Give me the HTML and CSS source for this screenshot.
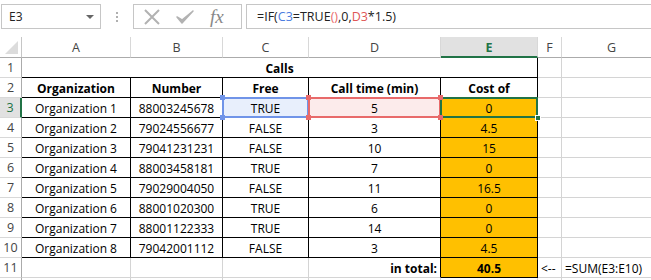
FILE: index.html
```html
<!DOCTYPE html>
<html>
<head>
<meta charset="UTF-8">
<title>Calls</title>
<link rel="stylesheet" href="styles.css">
</head>
<body>

    <div class="formula-bar">
        <div class="name-box">
            <span class="name">E3</span>
            <span class="drop"></span>
        </div>
        <div class="dots"><i></i><i></i><i></i></div>
        <div class="fn-box">
            <svg class="ico" width="20" height="20" viewBox="0 0 20 20">
                <path d="M3 3 L17 17 M17 3 L3 17" stroke="#b2b2b2" stroke-width="2" fill="none"/>
            </svg>
            <svg class="ico" width="22" height="20" viewBox="0 0 22 20">
                <path d="M3 10 L8 16 L19 4 L8 13 Z" fill="#b2b2b2" stroke="#b2b2b2" stroke-width="1.5" stroke-linejoin="round"/>
            </svg>
            <span class="fx">fx</span>
        </div>
        <div class="formula">
            <span>=IF(<span class="ref-c">C3</span>=TRUE<span class="paren">()</span>,0,<span class="ref-d">D3</span>*1.5)</span>
        </div>
    </div>

    <div class="sheet">
        <!-- column headers -->
        <div class="corner"><span class="tri"></span></div>
        <div class="col-h">A</div>
        <div class="col-h">B</div>
        <div class="col-h">C</div>
        <div class="col-h">D</div>
        <div class="col-h active">E</div>
        <div class="col-h">F</div>
        <div class="col-h">G</div>

        <!-- row 1 -->
        <div class="row-h">1</div>
        <div class="cell merged bold br bb">Calls</div>
        <div class="cell"></div>
        <div class="cell"></div>

        <!-- row 2 -->
        <div class="row-h">2</div>
        <div class="cell bold br bb">Organization</div>
        <div class="cell bold br bb">Number</div>
        <div class="cell bold br bb">Free</div>
        <div class="cell bold br bb">Call time (min)</div>
        <div class="cell bold br bb">Cost of</div>
        <div class="cell"></div>
        <div class="cell"></div>

        <!-- row 3 -->
        <div class="row-h active">3</div>
        <div class="cell br bb">Organization 1</div>
        <div class="cell br bb">88003245678</div>
        <div class="cell br bb ref-blue">TRUE
            <span class="h tl"></span><span class="h tr"></span><span class="h bl"></span><span class="h br-h"></span>
        </div>
        <div class="cell br bb ref-red">5
            <span class="h tl"></span><span class="h tr"></span><span class="h bl"></span><span class="h br-h"></span>
        </div>
        <div class="cell br bb cost current">0<span class="fill-handle"></span></div>
        <div class="cell"></div>
        <div class="cell"></div>

        <!-- row 4 -->
        <div class="row-h">4</div>
        <div class="cell br bb">Organization 2</div>
        <div class="cell br bb">79024556677</div>
        <div class="cell br bb">FALSE</div>
        <div class="cell br bb">3</div>
        <div class="cell br bb cost">4.5</div>
        <div class="cell"></div>
        <div class="cell"></div>

        <!-- row 5 -->
        <div class="row-h">5</div>
        <div class="cell br bb">Organization 3</div>
        <div class="cell br bb">79041231231</div>
        <div class="cell br bb">FALSE</div>
        <div class="cell br bb">10</div>
        <div class="cell br bb cost">15</div>
        <div class="cell"></div>
        <div class="cell"></div>

        <!-- row 6 -->
        <div class="row-h">6</div>
        <div class="cell br bb">Organization 4</div>
        <div class="cell br bb">88003458181</div>
        <div class="cell br bb">TRUE</div>
        <div class="cell br bb">7</div>
        <div class="cell br bb cost">0</div>
        <div class="cell"></div>
        <div class="cell"></div>

        <!-- row 7 -->
        <div class="row-h">7</div>
        <div class="cell br bb">Organization 5</div>
        <div class="cell br bb">79029004050</div>
        <div class="cell br bb">FALSE</div>
        <div class="cell br bb">11</div>
        <div class="cell br bb cost">16.5</div>
        <div class="cell"></div>
        <div class="cell"></div>

        <!-- row 8 -->
        <div class="row-h">8</div>
        <div class="cell br bb">Organization 6</div>
        <div class="cell br bb">88001020300</div>
        <div class="cell br bb">TRUE</div>
        <div class="cell br bb">6</div>
        <div class="cell br bb cost">0</div>
        <div class="cell"></div>
        <div class="cell"></div>

        <!-- row 9 -->
        <div class="row-h">9</div>
        <div class="cell br bb">Organization 7</div>
        <div class="cell br bb">88001122333</div>
        <div class="cell br bb">TRUE</div>
        <div class="cell br bb">14</div>
        <div class="cell br bb cost">0</div>
        <div class="cell"></div>
        <div class="cell"></div>

        <!-- row 10 -->
        <div class="row-h">10</div>
        <div class="cell br bb">Organization 8</div>
        <div class="cell br bb">79042001112</div>
        <div class="cell br bb">FALSE</div>
        <div class="cell br bb">3</div>
        <div class="cell br bb cost">4.5</div>
        <div class="cell"></div>
        <div class="cell"></div>

        <!-- row 11 -->
        <div class="row-h">11</div>
        <div class="cell"></div>
        <div class="cell"></div>
        <div class="cell"></div>
        <div class="cell bold right br">in total:</div>
        <div class="cell bold br bb cost">40.5</div>
        <div class="cell left">&lt;--</div>
        <div class="cell left">=SUM(E3:E10)</div>

        <!-- row 12, cut off by the window -->
        <div class="row-h"></div>
        <div class="cell"></div>
        <div class="cell"></div>
        <div class="cell"></div>
        <div class="cell"></div>
        <div class="cell"></div>
        <div class="cell"></div>
        <div class="cell"></div>
    </div>

</body>
</html>
```

FILE: styles.css
```css
*{
    box-sizing: border-box;
}

body{
    margin: 0;
    width: 651px;
    height: 280px;
    overflow: hidden;
    background-color: #fff;
    font-family: "Open Sans", "Liberation Sans", sans-serif;
}

/* formula bar */

.formula-bar {
    display: flex;
    align-items: center;
    height: 37px;
    padding: 3px 0 7px 1px;
}

.name-box {
    width: 100px;
    height: 25px;
    border: 1px solid #c6c6c6;
    display: flex;
    align-items: center;
    justify-content: space-between;
    padding: 0 6px 0 7px;
    font-size: 12px;
    color: #222;
}

.drop {
    width: 0;
    height: 0;
    border-left: 4px solid transparent;
    border-right: 4px solid transparent;
    border-top: 4px solid #666;
}

.dots {
    width: 32px;
    display: flex;
    flex-direction: column;
    align-items: center;
    gap: 2px;
}

.dots i {
    display: block;
    width: 2px;
    height: 2px;
    background-color: #b0b0b0;
}

.fn-box {
    width: 109px;
    height: 25px;
    border: 1px solid #c6c6c6;
    display: flex;
    align-items: center;
    padding-left: 8px;
    gap: 12px;
}

.fx {
    font-family: "Liberation Serif", serif;
    font-style: italic;
    font-size: 19px;
    color: #888;
    line-height: 1;
    margin-left: 2px;
}

.formula {
    flex: 1;
    height: 25px;
    margin-left: 4px;
    margin-right: -4px;
    border: 1px solid #c6c6c6;
    display: flex;
    align-items: center;
    padding-left: 10px;
    font-size: 12.5px;
    color: #222;
    white-space: nowrap;
}

.ref-c {
    color: #4a7ce0;
}

.paren {
    color: #e86a6a;
}

.ref-d {
    color: #e05656;
}

/* sheet */

.sheet {
    display: grid;
    grid-template-columns: 22px 109px 92px 86px 132px 97px 24px 100px;
    grid-template-rows: 21px repeat(11, 20px) 3px;
    font-size: 12px;
}

.corner {
    position: relative;
    border-right: 1px solid #c6c6c6;
    border-bottom: 1px solid #ababab;
}

.corner .tri {
    position: absolute;
    right: 3px;
    bottom: 3px;
    width: 0;
    height: 0;
    border-left: 13px solid transparent;
    border-bottom: 13px solid #dcdcdc;
}

.col-h {
    border-right: 1px solid #d8d8d8;
    border-bottom: 1px solid #ababab;
    display: flex;
    align-items: center;
    justify-content: center;
    color: #444;
    font-size: 12.5px;
    padding-top: 1px;
}

.col-h.active {
    background-color: #e1e1e1;
    color: #217346;
    font-weight: bold;
    border-bottom: 2px solid #217346;
    padding-top: 2px;
}

.row-h {
    border-right: 1px solid #ababab;
    border-bottom: 1px solid #d8d8d8;
    display: flex;
    align-items: center;
    justify-content: center;
    color: #444;
    font-size: 12.5px;
}

.row-h.active {
    background-color: #e1e1e1;
    color: #217346;
    border-right: 2px solid #217346;
}

.cell {
    position: relative;
    border-right: 1px solid #d4d4d4;
    border-bottom: 1px solid #d4d4d4;
    display: flex;
    align-items: center;
    justify-content: center;
    color: #000;
    white-space: nowrap;
    padding-top: 1px;
}

.cell.merged {
    grid-column: span 5;
}

.cell.br {
    border-right-color: #000;
}

.cell.bb {
    border-bottom-color: #000;
}

.cell.bold {
    font-weight: bold;
}

.cell.right {
    justify-content: flex-end;
    padding-right: 3px;
}

.cell.left {
    justify-content: flex-start;
    padding-left: 3px;
}

.cell.cost {
    background-color: #ffc000;
}

/* reference highlights */

.ref-blue {
    background-color: #e8effc;
}

.ref-blue::after,
.ref-red::after,
.current::after {
    content: "";
    position: absolute;
    top: -1px;
    left: -1px;
    right: -1px;
    bottom: -1px;
    border: 2px solid #7094e8;
}

.ref-red {
    background-color: #fcebeb;
}

.ref-red::after {
    border-color: #e86a6a;
}

.current::after {
    border-color: #217346;
}

.h {
    position: absolute;
    width: 5px;
    height: 5px;
    z-index: 2;
    background-color: #7094e8;
}

.ref-red .h {
    background-color: #e86a6a;
}

.h.tl { top: -3px; left: -3px; }
.h.tr { top: -3px; right: -3px; }
.h.bl { bottom: -3px; left: -3px; }
.h.br-h { bottom: -3px; right: -3px; }

.fill-handle {
    position: absolute;
    right: -4px;
    bottom: -4px;
    width: 6px;
    height: 6px;
    background-color: #217346;
    border: 1px solid #fff;
    z-index: 3;
}
```
